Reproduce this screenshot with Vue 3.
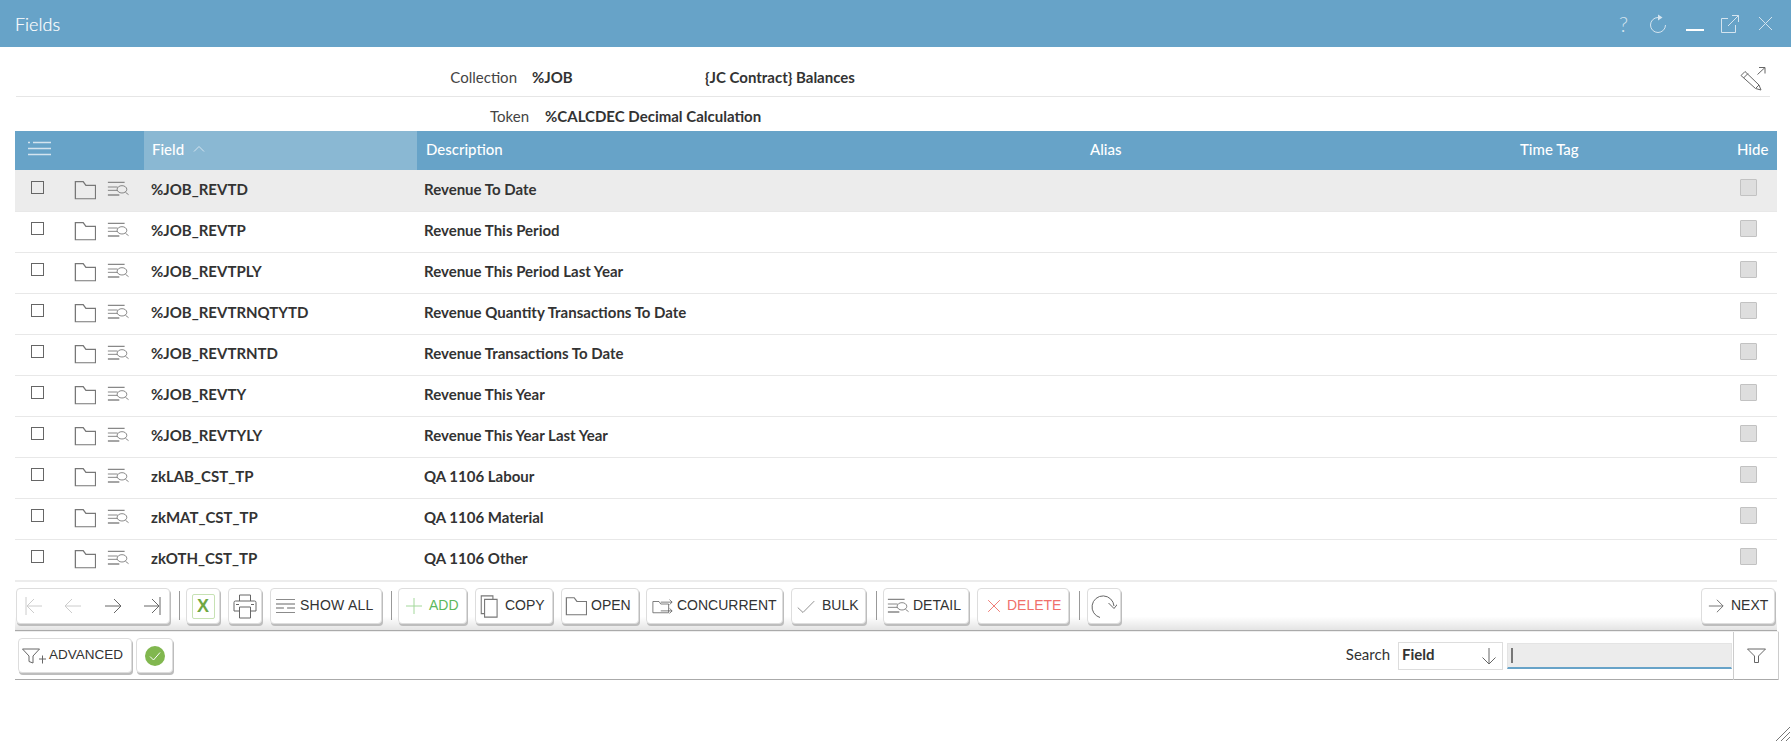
<script setup>
const rows = [
  { field: '%JOB_REVTD', desc: 'Revenue To Date' },
  { field: '%JOB_REVTP', desc: 'Revenue This Period' },
  { field: '%JOB_REVTPLY', desc: 'Revenue This Period Last Year' },
  { field: '%JOB_REVTRNQTYTD', desc: 'Revenue Quantity Transactions To Date' },
  { field: '%JOB_REVTRNTD', desc: 'Revenue Transactions To Date' },
  { field: '%JOB_REVTY', desc: 'Revenue This Year' },
  { field: '%JOB_REVTYLY', desc: 'Revenue This Year Last Year' },
  { field: 'zkLAB_CST_TP', desc: 'QA 1106 Labour' },
  { field: 'zkMAT_CST_TP', desc: 'QA 1106 Material' },
  { field: 'zkOTH_CST_TP', desc: 'QA 1106 Other' }
]

const folder = 'M1.500 22.500V2h8.500l3 4.500h10.500v16z'
const detailThin = 'M1 9h11M1 14h11M21 17l3.500 3.500'
const detailBold = 'M1 2h19M1 21h13'

const buttons = [
  { id: 'showall', label: 'SHOW ALL', icon: 'M0 2h24M0 9h24M0 15h10M14 15h10M0 22h24', w: 19, h: 16 },
  { sep: true },
  { id: 'add', label: 'ADD', icon: 'M12 0v24M0 12h24', tone: 'green', w: 16, h: 16 },
  { id: 'copy', label: 'COPY', icon: 'M5.500 19.500H1.500V1h14v3.500M5.500 4.500h15V23h-15z', w: 20, h: 23 },
  { id: 'open', label: 'OPEN', icon: folder, w: 22, h: 20 },
  { id: 'concurrent', label: 'CONCURRENT', icon: 'M1 4h7l2 4h9v14H1zM10 5h13M20 1l3 4-3 4M10 19h13M20 15l3 4-3 4', w: 21, h: 15 },
  { id: 'bulk', label: 'BULK', icon: 'M1 14l7 9L23 2', w: 18, h: 13 }
]
</script>

<template>
  <div class="page">
    <header class="titlebar">
      <span class="titlebar__name">Fields</span>
      <div class="titlebar__tools">
        <span class="titlebar__help">?</span>
        <svg class="titlebar__icon" width="18" height="20" viewBox="0 0 18 20"><path d="M9 3.500a7.500 7.500 0 1 0 7.500 7.500" /><path class="solid" d="M9 0.500l4.500 3-4.500 3z" /></svg>
        <span class="titlebar__min"></span>
        <svg class="titlebar__icon" width="20" height="20" viewBox="0 0 20 20"><path d="M8 4.500H1.500v14h14V11M8 12L18.500 1.500M12 1.500h6.500V8" /></svg>
        <svg class="titlebar__icon titlebar__close" width="15" height="15" viewBox="0 0 15 15"><path d="M1 1l13 13M14 1L1 14" /></svg>
      </div>
    </header>

    <main class="content">
      <div class="meta meta--collection">
        <span class="meta__label">Collection</span>
        <span class="meta__value meta__value--code">%JOB</span>
        <span class="meta__value">{JC Contract} Balances</span>
        <svg class="meta__edit" width="26" height="25" viewBox="0 0 26 25">
          <path d="M1 8.500l4-4L19 18l2 5-5.500-1.500zM3.500 11l4.500-4.500M16 21l3-3" />
          <path d="M17.500 7.500L25 0.500M19 0.500h6v6" />
        </svg>
      </div>
      <div class="meta meta--token">
        <span class="meta__label">Token</span>
        <span class="meta__value">%CALCDEC Decimal Calculation</span>
      </div>

      <div class="grid grid--head">
        <div class="cell cell--tools">
          <svg width="23" height="15" viewBox="0 0 23 15"><path d="M0 1.500h2M5 1.500h18M0 7.500h23M0 13.500h23" /></svg>
        </div>
        <div class="cell cell--sorted">
          Field
          <svg class="chevron" width="12" height="7" viewBox="0 0 12 7"><path d="M1 6.500l5-5 5 5" /></svg>
        </div>
        <div class="cell">Description</div>
        <div class="cell">Alias</div>
        <div class="cell">Time Tag</div>
        <div class="cell cell--hide">Hide</div>
      </div>

      <div v-for="(row, i) in rows" :key="row.field" class="grid grid--row" :class="{ 'grid--active': i === 0 }">
        <div class="cell cell--tools">
          <span class="check"></span>
          <svg class="ico-folder" width="22" height="20" viewBox="0 0 24 24" preserveAspectRatio="none"><path :d="folder" /></svg>
          <svg class="ico-detail" width="22" height="16" viewBox="0 0 25 24" preserveAspectRatio="none">
            <path :d="detailThin" />
            <path class="bold-line" :d="detailBold" />
            <circle cx="17" cy="12.500" r="5.500" />
          </svg>
        </div>
        <div class="cell">{{ row.field }}</div>
        <div class="cell">{{ row.desc }}</div>
        <div class="cell"></div>
        <div class="cell"></div>
        <div class="cell cell--hide"><span class="hide-box"></span></div>
      </div>

      <div class="toolbar">
        <div class="btn btn--nav">
          <svg class="muted" width="18" height="20" viewBox="0 0 18 20"><path d="M1 1v18M17 10H2M9 3l-7 7 7 7" /></svg>
          <svg class="muted" width="18" height="20" viewBox="0 0 18 20"><path d="M17 10H1M8 3l-7 7 7 7" /></svg>
          <svg width="18" height="20" viewBox="0 0 18 20"><path d="M1 10h16M10 3l7 7-7 7" /></svg>
          <svg width="18" height="20" viewBox="0 0 18 20"><path d="M17 1v18M1 10h15M9 3l7 7-7 7" /></svg>
        </div>
        <span class="sep"></span>
        <div class="btn btn--excel"><span class="excel">X</span></div>
        <div class="btn btn--print">
          <svg width="24" height="25" viewBox="0 0 24 25"><path d="M6.500 7V1h11v6M1 17V8.500a1.500 1.500 0 0 1 1.500-1.500h19A1.500 1.500 0 0 1 23 8.500V17h-5.500M6.500 17H1M6.500 13h11v11h-11zM3 10.500h3M18 10.500h3" /></svg>
        </div>
        <template v-for="b in buttons" :key="b.id || 'sep'">
          <span v-if="b.sep" class="sep"></span>
          <div v-else class="btn btn--text" :class="[`btn--${b.id}`, b.tone && `btn--${b.tone}`]">
            <svg :width="b.w" :height="b.h" viewBox="0 0 24 24" preserveAspectRatio="none"><path :d="b.icon" /></svg>
            {{ b.label }}
          </div>
        </template>
        <span class="sep sep--b"></span>
        <div class="btn btn--text btn--detail">
          <svg width="22" height="16" viewBox="0 0 25 24" preserveAspectRatio="none">
            <path :d="detailThin" />
            <path class="bold-line" :d="detailBold" />
            <circle cx="17" cy="12.500" r="5.500" />
          </svg>
          DETAIL
        </div>
        <div class="btn btn--text btn--delete btn--red">
          <svg width="14" height="14" viewBox="0 0 24 24"><path d="M2 2l20 20M22 2L2 22" /></svg>
          DELETE
        </div>
        <span class="sep sep--b"></span>
        <div class="btn btn--refresh">
          <svg width="26" height="26" viewBox="0 0 26 26"><path d="M9 24.500A11 11 0 1 1 23 13M17.500 10L23 15.500l4-5" /></svg>
        </div>
        <div class="btn btn--text btn--next">
          <svg width="16" height="18" viewBox="0 0 18 20"><path d="M1 10h16M10 3l7 7-7 7" /></svg>
          NEXT
        </div>
      </div>

      <div class="filters">
        <div class="filters__left">
          <div class="btn btn--text btn--advanced">
            <svg width="24" height="16" viewBox="0 0 24 16"><path d="M0.500 1h17l-6.500 7v7l-4-1.500V8zM17 11h7M20.500 7.500v8" /></svg>
            ADVANCED
          </div>
          <div class="btn btn--ok">
            <svg width="20" height="20" viewBox="0 0 20 20"><circle class="ok" cx="10" cy="10" r="10" /><path class="ok-tick" d="M5 10.500l3.500 3.500L15 6.500" /></svg>
          </div>
        </div>
        <div class="filters__search">
          <span class="filters__label">Search</span>
          <div class="select">
            Field
            <svg width="16" height="18" viewBox="0 0 16 18"><path d="M8 1v16M1.500 10.500L8 17l6.500-6.500" /></svg>
          </div>
          <div class="search"><span class="search__caret"></span></div>
        </div>
        <div class="filters__toggle">
          <svg width="19" height="15" viewBox="0 0 19 15"><path d="M0.500 1h18l-7 7v6.500h-4V8z" /></svg>
        </div>
      </div>
    </main>

    <svg class="grip" width="14" height="14" viewBox="0 0 14 14"><path d="M0 14L14 0M5 14L14 5M10 14l4-4" /></svg>
  </div>
</template>

<style>
html, body {
  background: #fff;
  overflow: hidden;
}
</style>

<style scoped>
.page {
  position: relative;
  height: 742px;
  font-family: Lato, "Open Sans", sans-serif;
  font-size: 15px;
  color: #333;
  background: #fff;
}

svg {
  fill: none;
  stroke: #666;
  stroke-width: 1;
  flex-shrink: 0;
}

.titlebar {
  height: 47px;
  padding: 0 18px 0 15px;
  display: flex;
  align-items: center;
  justify-content: space-between;
  background: #67a3c8;
  color: #fff;
}

.titlebar__name {
  font-size: 18px;
  font-weight: 300;
  -webkit-text-stroke: 0.200px #fff;
}

.titlebar__tools {
  display: flex;
  align-items: center;
  gap: 16px;
}

.titlebar__icon {
  stroke: #d4e4ef;
}

.titlebar__icon .solid {
  fill: #d4e4ef;
  stroke: none;
}

.titlebar__close {
  margin-left: 2px;
}

.titlebar__help {
  margin-right: 5px;
  font-size: 21px;
  font-weight: 300;
  line-height: 24px;
  color: #d4e4ef;
}

.titlebar__min {
  width: 18px;
  height: 2px;
  margin: 13px 0 0 3px;
  background: #fff;
}

.content {
  padding: 0 14px 0 15px;
}

.meta {
  position: relative;
  box-sizing: border-box;
  display: flex;
  align-items: center;
}

.meta--collection {
  height: 50px;
  margin: 0 7px 0 1px;
  padding-top: 11px;
  border-bottom: 1px solid #e6e6e6;
}

.meta--token {
  height: 34px;
  padding-top: 4px;
}

.meta__label {
  font-size: 15px;
  color: #444;
  text-align: right;
}

.meta--collection .meta__label {
  width: 501px;
  margin-right: 15px;
}

.meta--token .meta__label {
  width: 514px;
  margin-right: 16px;
}

.meta__value {
  font-weight: 700;
}

.meta__value--code {
  width: 173px;
}

.meta__edit {
  position: absolute;
  right: 4px;
  top: 20px;
}

.grid {
  display: grid;
  grid-template-columns: 129px 273px 666px 430px 214px 50px;
  align-items: stretch;
}

.grid--head {
  height: 39px;
  background: #67a3c8;
  color: #fff;
  font-weight: 500;
}

.grid--head .cell {
  padding-bottom: 4px;
  box-sizing: border-box;
}

.grid--head svg {
  stroke: #d4e4ef;
  stroke-width: 1.300;
}

.grid--head .chevron {
  stroke-width: 1;
}

.grid--row {
  height: 41px;
  box-shadow: 0 1px 0 #e8e8e8;
  font-weight: 700;
}

.grid--row .cell {
  padding-bottom: 4px;
  box-sizing: border-box;
}

.grid--active {
  background: #ececec;
}

.cell {
  display: flex;
  align-items: center;
  padding-left: 7px;
}

.cell--tools {
  padding-left: 16px;
}

.grid--head .cell--tools {
  padding-left: 13px;
}

.grid--head .cell:nth-child(3) {
  padding-left: 9px;
}

.cell--sorted {
  gap: 9px;
  padding-left: 8px;
  background: #8ab8d3;
}

.cell--hide {
  padding-left: 10px;
}

.check {
  width: 13px;
  height: 13px;
  margin-top: -2px;
  box-sizing: border-box;
  border: 1.500px solid #666;
}

.ico-folder {
  margin-left: 30px;
  margin-top: 3px;
  stroke: #777;
  stroke-width: 1.400;
}

.ico-detail {
  margin-left: 11px;
  margin-top: 1px;
}

.bold-line {
  stroke: #888;
  stroke-width: 2;
}

.hide-box {
  width: 17px;
  height: 17px;
  margin: -2px 0 0 3px;
  box-sizing: border-box;
  background: #dedede;
  border: 1.500px solid #c2c2c2;
  border-radius: 1px;
}

.toolbar {
  height: 51px;
  box-sizing: border-box;
  padding: 6px 0 0 1px;
  display: flex;
  align-items: flex-start;
  gap: 8px;
  border-top: 2px solid #ececec;
  border-bottom: 1px solid #aaa;
  background: linear-gradient(#fff 72%, #e4e4e4);
}

.btn {
  height: 36px;
  box-sizing: border-box;
  display: flex;
  align-items: center;
  justify-content: center;
  gap: 5px;
  background: #fff;
  border: 1px solid #ddd;
  border-radius: 4px;
  box-shadow: 1px 2px 0 #bdbdbd;
  font-family: "Liberation Sans", Arial, sans-serif;
  font-size: 14px;
  color: #333;
  white-space: nowrap;
}

.btn--text {
  justify-content: flex-start;
  padding-bottom: 2px;
}

.btn--text svg {
  margin-top: 2px;
}

.sep {
  width: 1px;
  height: 29px;
  margin: 3px -2px 0 1px;
  background: #999;
}

.sep--b {
  margin: 3px -1px 0 2px;
}

.btn--nav { width: 154px; justify-content: space-between; padding: 0 8px; }
.btn--excel { width: 34px; }
.btn--print { width: 34px; }
.btn--showall { width: 112px; padding-left: 5px; gap: 5px; letter-spacing: 0.250px; }
.btn--add { width: 69px; padding-left: 7px; gap: 7px; }
.btn--copy { width: 78px; padding-left: 4px; gap: 5px; }
.btn--open { width: 78px; padding-left: 3px; gap: 4px; }
.btn--concurrent { width: 137px; margin-left: -1px; padding-left: 5px; gap: 4px; }
.btn--bulk { width: 75px; padding-left: 5px; gap: 7px; }
.btn--detail { width: 86px; margin-left: -1px; padding-left: 3px; gap: 4px; }
.btn--delete { width: 92px; padding-left: 9px; gap: 6px; }
.btn--refresh { width: 34px; }
.btn--next { width: 74px; margin-left: auto; margin-right: 2px; padding-left: 6px; gap: 7px; }

.btn--bulk svg, .btn--concurrent svg { stroke: #555; }

.muted {
  stroke: #ccc;
}

.btn--green { color: #5cb85c; }
.btn--green svg { stroke: #a3d89b; stroke-width: 1.500; }
.btn--red { color: #f0706a; }
.btn--red svg { stroke: #ee6a64; stroke-width: 1.500; }
.btn--showall svg { stroke-width: 1.300; }
.btn--copy svg, .btn--open svg { stroke: #777; stroke-width: 1.300; }

.excel {
  width: 23px;
  height: 25px;
  box-sizing: border-box;
  display: flex;
  align-items: center;
  justify-content: center;
  border: 1.500px solid #c7e2b4;
  border-radius: 2px;
  color: #6fa843;
  font-size: 18px;
  font-weight: 700;
}

.filters {
  height: 49px;
  margin-right: -2px;
  box-sizing: border-box;
  display: flex;
  align-items: center;
  justify-content: space-between;
  border-top: 1px solid #eee;
  border-bottom: 1px solid #aaa;
}

.filters__left {
  display: flex;
  gap: 4px;
  padding-left: 3px;
}

.btn--advanced {
  width: 114px;
  height: 35px;
  padding-left: 3px;
  gap: 3px;
  font-size: 13.500px;
}

.btn--ok {
  width: 37px;
  height: 35px;
}

.ok {
  fill: #81b74f;
  stroke: none;
}

.ok-tick {
  stroke: #fff;
}

.filters__search {
  margin-left: auto;
  display: flex;
  align-items: center;
}

.filters__label {
  margin: -3px 8px 0 0;
}

.select {
  width: 105px;
  height: 28px;
  box-sizing: border-box;
  padding: 0 5px 3px 3px;
  display: flex;
  align-items: center;
  justify-content: space-between;
  border: 1px solid #ddd;
  font-weight: 700;
}

.select svg {
  margin-top: 3px;
}

.search {
  width: 225px;
  height: 26px;
  margin-left: 4px;
  box-sizing: border-box;
  display: flex;
  align-items: center;
  padding-left: 3px;
  background: #ececec;
  border: 1px solid #e4e4e4;
  border-bottom: 2px solid #67a3c8;
}

.search__caret {
  width: 2px;
  height: 15px;
  background: #777;
}

.filters__toggle {
  width: 46px;
  height: 48px;
  margin-left: 1px;
  box-sizing: border-box;
  display: flex;
  align-items: center;
  justify-content: center;
  border-left: 1px solid #ccc;
  border-right: 1px solid #ccc;
}

.grip {
  position: absolute;
  right: 1px;
  bottom: 1px;
  stroke: #777;
}
</style>
